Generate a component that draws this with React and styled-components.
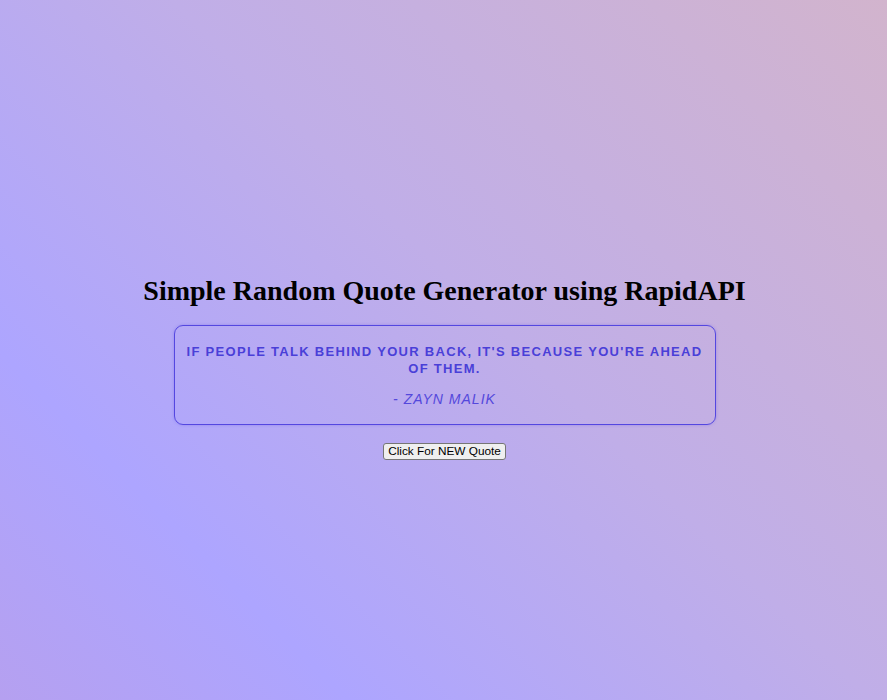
import React, { useState } from "react";
import styled, { createGlobalStyle } from "styled-components";

const GlobalStyle = createGlobalStyle`
  html, body {
    margin: 0;
    padding: 0;
    height: 100%;
  }
  body {
    font-family: "Liberation Serif", "Times New Roman", serif;
    background: linear-gradient(45deg, #b5a0f0 0%, #ada5ff 22%, #c0aee8 55%, #d2b4cd 100%);
    background-attachment: fixed;
  }
`;

const Page = styled.div`
  min-height: 100vh;
  box-sizing: border-box;
  padding-top: 34px;
  padding-left: 2px;
  display: flex;
  flex-direction: column;
  align-items: center;
  justify-content: center;
`;

const Title = styled.h1`
  font-size: 28px;
  font-weight: bold;
  margin: 0 0 18px;
  color: #000;
`;

const QuoteCard = styled.div`
  width: 540px;
  box-sizing: content-box;
  border: 1px solid #5447e0;
  border-radius: 9px;
  padding: 17px 0;
  text-align: center;
  font-family: "Liberation Sans", Arial, sans-serif;
  color: #4a3fd8;
  box-shadow: 0 0 3px rgba(84, 71, 224, 0.35);
`;

const QuoteText = styled.p`
  margin: 0 8px;
  font-size: 13px;
  font-weight: bold;
  letter-spacing: 1.3px;
  line-height: 17px;
  text-transform: uppercase;
`;

const Author = styled.p`
  margin: 14px 0 0;
  font-size: 14px;
  font-style: italic;
  letter-spacing: 1px;
  text-transform: uppercase;
  color: #5448dc;
`;

const NewButton = styled.button`
  margin-top: 18px;
  padding: 1px 4px;
  font-family: "Liberation Sans", Arial, sans-serif;
  font-size: 11.8px;
  line-height: 13px;
  color: #000;
  background: #efefef;
  border: 1px solid #767676;
  border-radius: 3px;
`;

const quotes = [
  { text: "If people talk behind your back, it's because you're ahead of them.", author: "Zayn Malik" },
];

export default function App() {
  const [idx, setIdx] = useState(0);
  const q = quotes[idx];
  return (
    <>
      <GlobalStyle />
      <Page>
        <Title>Simple Random Quote Generator using RapidAPI</Title>
        <QuoteCard>
          <QuoteText>{q.text}</QuoteText>
          <Author>- {q.author}</Author>
        </QuoteCard>
        <NewButton onClick={() => setIdx((idx + 1) % quotes.length)}>Click For NEW Quote</NewButton>
      </Page>
    </>
  );
}
